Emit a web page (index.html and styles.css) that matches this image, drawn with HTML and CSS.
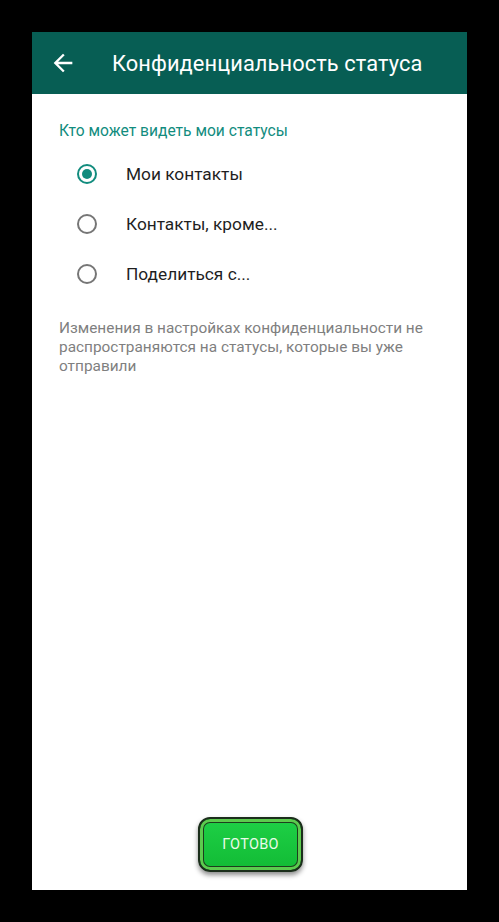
FILE: index.html
```html
<!DOCTYPE html>
<html lang="ru">
<head>
<meta charset="utf-8">
<link rel="stylesheet" href="styles.css">
</head>
<body>
<div class="screen">
  <header class="appbar">
    <svg class="back" viewBox="0 0 24 24" width="28" height="28"><path fill="#fff" d="M20 11H7.83l5.59-5.59L12 4l-8 8 8 8 1.41-1.41L7.83 13H20v-2z"/></svg>
    <h1 class="title">Конфиденциальность статуса</h1>
  </header>
  <main class="content">
    <div class="section-label">Кто может видеть мои статусы</div>
    <ul class="options">
      <li class="option"><span class="radio checked"></span><span class="opt-text">Мои контакты</span></li>
      <li class="option"><span class="radio"></span><span class="opt-text">Контакты, кроме...</span></li>
      <li class="option"><span class="radio"></span><span class="opt-text">Поделиться с...</span></li>
    </ul>
    <p class="note">Изменения в настройках конфиденциальности не распространяются на статусы, которые вы уже отправили</p>
  </main>
  <footer class="footer">
    <button class="done">ГОТОВО</button>
  </footer>
</div>
</body>
</html>
```
FILE: styles.css
```css
html, body { margin: 0; padding: 0; }
body {
  background: #000;
  width: 499px;
  height: 922px;
  font-family: Roboto, "Noto Sans", sans-serif;
  overflow: hidden;
}
.screen {
  margin: 32px 0 0 32px;
  width: 435px;
  height: 858px;
  background: #fff;
  display: flex;
  flex-direction: column;
}
.appbar {
  height: 62px;
  background: #075e54;
  display: flex;
  align-items: center;
  padding-left: 17px;
  box-sizing: border-box;
  flex-shrink: 0;
}
.back { display: block; }
.title {
  margin: 0 0 0 35px;
  color: #fff;
  font-weight: 400;
  font-size: 21.8px;
  letter-spacing: 0.1px;
}
.content {
  flex: 1;
  padding: 27px 20px 0 27px;
}
.section-label {
  color: #128c7e;
  font-size: 15.6px;
  line-height: 20px;
}
.options {
  list-style: none;
  margin: 8px 0 0 0;
  padding: 0;
}
.option {
  height: 50px;
  display: flex;
  align-items: center;
  padding-left: 18px;
}
.radio {
  width: 16px;
  height: 16px;
  border: 2px solid #767676;
  border-radius: 50%;
  display: flex;
  align-items: center;
  justify-content: center;
  flex-shrink: 0;
}
.radio.checked { border-color: #128c7e; }
.radio.checked::after {
  content: "";
  width: 10px;
  height: 10px;
  border-radius: 50%;
  background: #128c7e;
}
.opt-text {
  margin-left: 29px;
  font-size: 17.3px;
  color: #1f1f1f;
}
.note {
  margin: 20px 0 0 0;
  color: #7f7f7f;
  font-size: 15.4px;
  line-height: 19px;
}
.footer {
  display: flex;
  justify-content: center;
  padding-bottom: 18px;
  padding-left: 2px;
}
.done {
  width: 105px;
  height: 55px;
  border-radius: 12px;
  border: 2px solid #1b2e1b;
  background: linear-gradient(#1ed046, #12bb35);
  box-shadow: inset 0 0 0 3px #5ccb4e, inset 0 0 0 4px #1d3d1d, 0 3px 5px rgba(0,0,0,0.45);
  color: #eafbe9;
  font-family: Roboto, sans-serif;
  font-size: 14.5px;
  letter-spacing: 0.3px;
  padding: 0;
}
```
